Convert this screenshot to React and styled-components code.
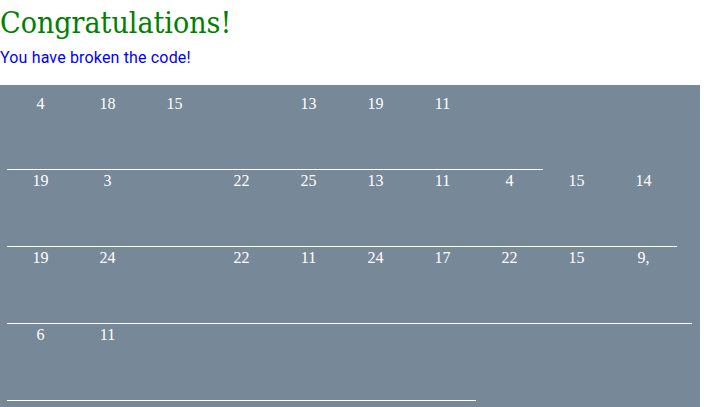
import React from "react";
import styled, { createGlobalStyle } from "styled-components";

const GlobalStyle = createGlobalStyle`
  html, body {
    margin: 0;
    padding: 0;
    background: #ffffff;
  }
  body {
    font-family: "Liberation Serif", serif;
    overflow: hidden;
  }
`;

const Page = styled.div`
  display: flex;
  flex-direction: column;
`;

const Title = styled.h1`
  margin: 0;
  padding-top: 3px;
  font-family: "DejaVu Serif", serif;
  font-stretch: condensed;
  font-weight: 400;
  font-size: 30px;
  line-height: 40px;
  color: #008000;
`;

const Subtitle = styled.p`
  margin: 5px 0 18px;
  font-family: Roboto, "Noto Sans", sans-serif;
  font-size: 16px;
  line-height: 19px;
  letter-spacing: 0.16px;
  color: #0000ff;
`;

const Board = styled.div`
  width: 700px;
  min-height: 330px;
  box-sizing: border-box;
  padding: 8px 0 0 7px;
  background: #778899;
  display: flex;
  flex-direction: column;
  align-items: flex-start;
`;

const Row = styled.div`
  display: flex;
  height: 76px;
  border-bottom: 1px solid #ffffff;
`;

const Cell = styled.div`
  width: ${(p) => (p.$narrow ? 15 : 67)}px;
  flex: none;
  padding-top: 2px;
  text-align: center;
  font-family: "Liberation Serif", "Times New Roman", serif;
  font-size: 16px;
  line-height: 18px;
  color: #ffffff;
`;

const rows = [
  ["4", "18", "15", "", "13", "19", "11", ""],
  ["19", "3", "", "22", "25", "13", "11", "4", "15", "14"],
  ["19", "24", "", "22", "11", "24", "17", "22", "15", "9,", "|"],
  ["6", "11", "", "", "", "", ""],
];

export default function App() {
  return (
    <Page>
      <GlobalStyle />
      <Title>Congratulations!</Title>
      <Subtitle>You have broken the code!</Subtitle>
      <Board>
        {rows.map((row, i) => (
          <Row key={i}>
            {row.map((n, j) =>
              n === "|" ? (
                <Cell key={j} $narrow />
              ) : (
                <Cell key={j}>{n}</Cell>
              )
            )}
          </Row>
        ))}
      </Board>
    </Page>
  );
}
